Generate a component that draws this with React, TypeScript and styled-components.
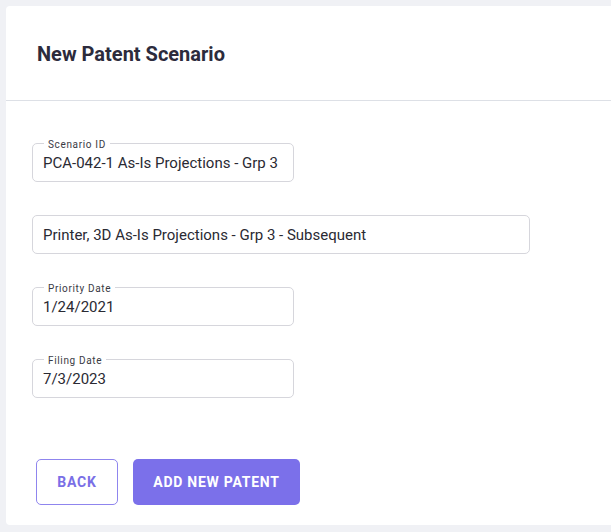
import { createGlobalStyle, styled } from 'styled-components';

const GlobalStyle = createGlobalStyle`
    html, body {
        margin: 0;
        padding: 0;
        background: #f0f1f5;
        font-family: Roboto, "Liberation Sans", Arial, sans-serif;
        overflow: hidden;
    }
`;

interface FieldProps {
    label?: string;
    value: string;
    wide?: boolean;
}

const Field = (props: FieldProps) => {
    const { label, value, wide } = props;
    return (
        <FieldBox $wide={wide}>
            {label && <FieldLabel>{label}</FieldLabel>}
            <FieldValue>{value}</FieldValue>
        </FieldBox>
    );
};

const App = () => {
    return (
        <>
            <GlobalStyle />
            <Page>
                <Card>
                    <Header>
                        <Title>New Patent Scenario</Title>
                    </Header>
                    <Body>
                        <Fields>
                            <Field label="Scenario ID" value="PCA-042-1 As-Is Projections - Grp 3" />
                            <Field value="Printer, 3D As-Is Projections - Grp 3 - Subsequent" wide />
                            <Field label="Priority Date" value="1/24/2021" />
                            <Field label="Filing Date" value="7/3/2023" />
                        </Fields>
                        <Actions>
                            <OutlineButton>Back</OutlineButton>
                            <PrimaryButton>Add New Patent</PrimaryButton>
                        </Actions>
                    </Body>
                </Card>
            </Page>
        </>
    );
};

export default App;

const Page = styled.div`
    padding: 6px 0 6px 6px;
    width: 680px;
`;

const Card = styled.div`
    background: #ffffff;
    border-radius: 4px;
`;

const Header = styled.div`
    height: 94px;
    display: flex;
    align-items: center;
    padding-left: 31px;
    border-bottom: 1px solid #dde0e6;
`;

const Title = styled.div`
    font-size: 20px;
    font-weight: 700;
    color: #2c2b3c;
    margin-top: 1px;
`;

const Body = styled.div`
    padding: 42px 0 20px 26px;
`;

const Fields = styled.div`
    display: flex;
    flex-direction: column;
    gap: 33px;
`;

const FieldBox = styled.div<{ $wide?: boolean }>`
    position: relative;
    box-sizing: border-box;
    width: ${(p) => (p.$wide ? '498px' : '262px')};
    height: 39px;
    border: 1px solid #d6d6dc;
    border-radius: 5px;
    padding: 10px 10px 0 10px;
`;

const FieldLabel = styled.div`
    position: absolute;
    top: -4px;
    left: 11px;
    padding: 0 4px;
    background: #ffffff;
    font-size: 10px;
    line-height: 10px;
    color: #3a3a44;
    letter-spacing: 0.65px;
`;

const FieldValue = styled.div`
    font-size: 15px;
    line-height: 18px;
    color: #2a2a33;
    white-space: nowrap;
`;

const Actions = styled.div`
    display: flex;
    gap: 15px;
    margin-top: 61px;
    padding-left: 4px;
`;

const BaseButton = styled.button`
    box-sizing: border-box;
    height: 46px;
    border-radius: 5px;
    font-family: Roboto, "Liberation Sans", Arial, sans-serif;
    font-size: 14px;
    font-weight: 700;
    text-transform: uppercase;
    letter-spacing: 0.75px;
    cursor: pointer;
`;

const OutlineButton = styled(BaseButton)`
    width: 82px;
    background: #ffffff;
    color: #7a6fe6;
    border: 1px solid #8f85ee;
`;

const PrimaryButton = styled(BaseButton)`
    width: 167px;
    background: #7b70ea;
    color: #ffffff;
    border: none;
`;
